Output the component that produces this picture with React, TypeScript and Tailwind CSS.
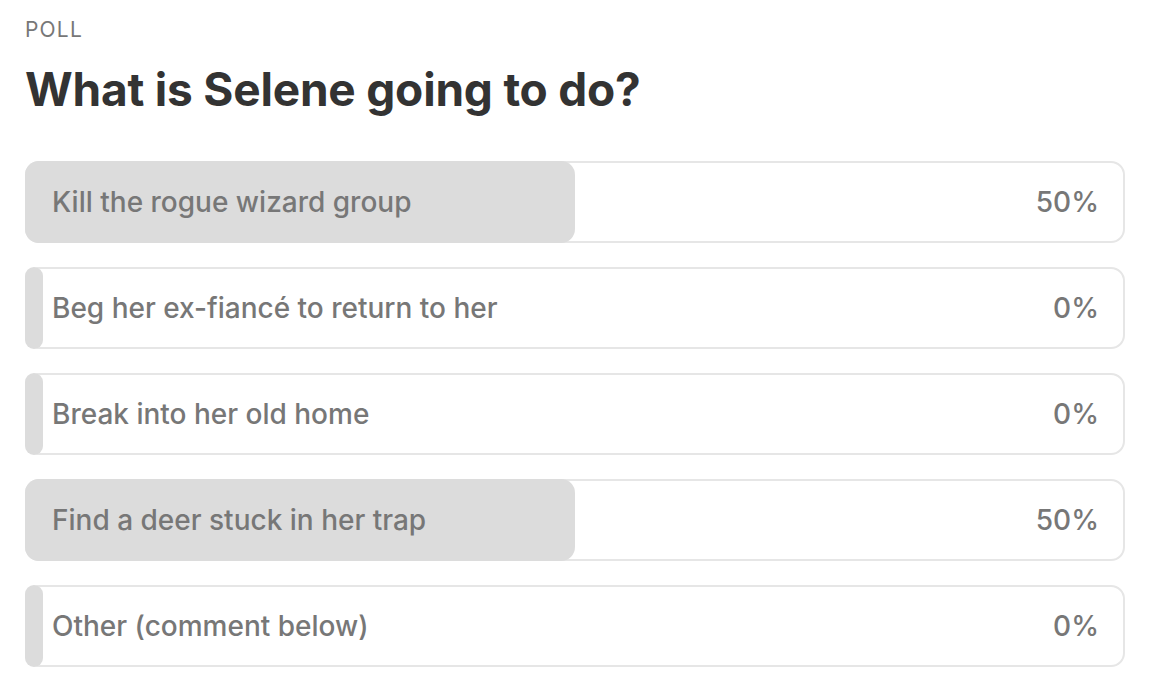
import React from 'react'

// ── Data ──────────────────────────────────────────────────────────────────────

interface PollOption {
  label: string
  percent: number
}

const options: PollOption[] = [
  { label: 'Kill the rogue wizard group', percent: 50 },
  { label: 'Beg her ex-fiancé to return to her', percent: 0 },
  { label: 'Break into her old home', percent: 0 },
  { label: 'Find a deer stuck in her trap', percent: 50 },
  { label: 'Other (comment below)', percent: 0 },
]

// ── Option row ────────────────────────────────────────────────────────────────

const OptionRow: React.FC<{ option: PollOption }> = ({ option }) => (
  <div className="relative h-[82px] rounded-[14px] border-2 border-[#e6e6e6] bg-white">
    {/* result bar */}
    <div
      className="absolute -left-[2px] -top-[2px] -bottom-[2px] min-w-[18px] rounded-[14px] bg-[#dcdcdc]"
      style={{ width: `calc(${option.percent}% + 2px)` }}
    />
    <div className="relative flex h-full items-center justify-between pl-[25px] pr-[24px]">
      <span className="text-[28px] font-medium text-[#777777]">{option.label}</span>
      <span className="text-[28px] font-medium text-[#777777]">{option.percent}%</span>
    </div>
  </div>
)

// ── App ───────────────────────────────────────────────────────────────────────

export default function App() {
  return (
    <div
      className="min-h-[696px] w-[1158px] bg-white pl-[25px] pt-[17px]"
      style={{ fontFamily: 'Inter, "Noto Sans", sans-serif' }}
    >
      <div className="w-[1100px]">
        <p className="text-[21px] leading-[26px] tracking-[1.2px] text-[#777777]">POLL</p>
        <h1 className="mt-[19px] text-[46px] font-bold leading-[54px] tracking-[-0.2px] text-[#333333]">
          What is Selene going to do?
        </h1>

        <div className="mt-[45px] flex flex-col gap-[24px]">
          {options.map((o) => (
            <OptionRow key={o.label} option={o} />
          ))}
        </div>
      </div>
    </div>
  )
}
